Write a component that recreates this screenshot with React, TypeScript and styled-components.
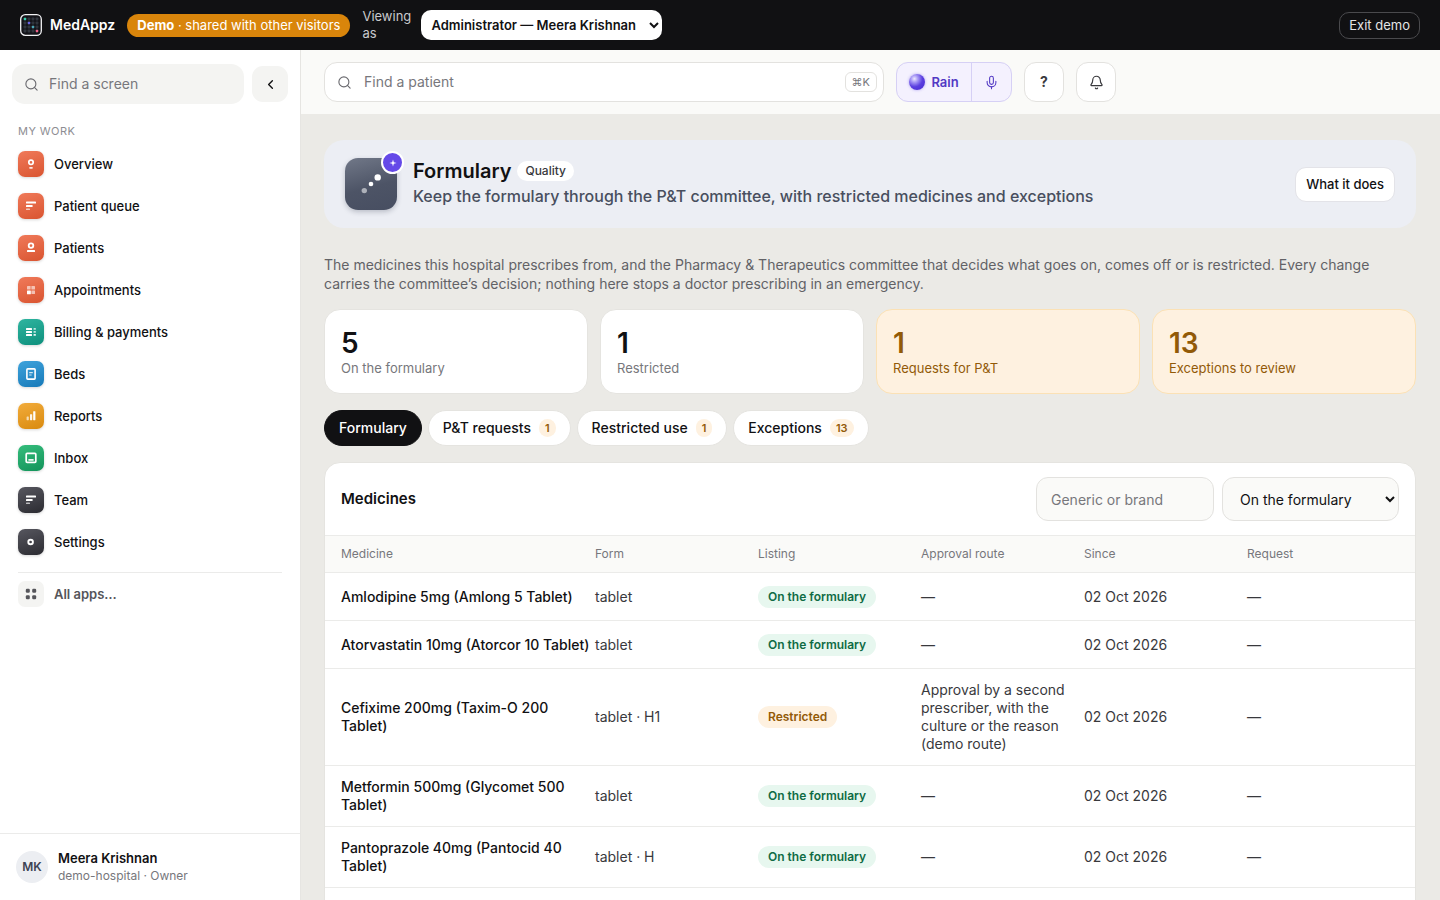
import React from 'react';
import styled, { createGlobalStyle } from 'styled-components';
import { Search, ChevronLeft, Mic, Bell } from 'lucide-react';

const Global = createGlobalStyle`
  * { box-sizing: border-box; }
  html, body, #root { height: 100%; }
  body {
    margin: 0;
    overflow: hidden;
    background: #ebeae6;
    color: #111113;
    font-family: Inter, "Liberation Sans", sans-serif;
    font-size: 14px;
    line-height: 18px;
  }
  button, input, select { font: inherit; color: inherit; margin: 0; }
  button { cursor: pointer; }
  input { outline: none; }
  input::placeholder { color: #77777c; opacity: 1; }
  h1, h2, p, ul { margin: 0; padding: 0; }
`;

const Shell = styled.div`
  height: 100vh;
  display: flex;
  flex-direction: column;
`;

const DemoBar = styled.header`
  flex: none;
  height: 50px;
  padding: 0 20px;
  display: flex;
  align-items: center;
  gap: 12px;
  background: #111113;
  color: #fff;
`;

const Brand = styled.a`
  display: flex;
  align-items: center;
  gap: 8px;
  color: inherit;
  text-decoration: none;
  font-size: 14px;
  font-weight: 600;
`;

const DemoPill = styled.p`
  flex: none;
  height: 23px;
  padding: 0 10px;
  border-radius: 12px;
  background: #d9850b;
  font-size: 13px;
  line-height: 23px;
  white-space: nowrap;
`;

const ViewingLabel = styled.label`
  flex: none;
  width: 47px;
  color: #c9c9cc;
  font-size: 13px;
  line-height: 17px;
`;

const RoleSelect = styled.select`
  width: 241px;
  height: 30px;
  padding: 0 0 0 6px;
  border: 0;
  border-radius: 10px;
  background: #fff;
  color: #111113;
  font-size: 13px;
  font-weight: 600;
`;

const ExitButton = styled.button`
  height: 27px;
  margin-left: auto;
  padding: 0 9px;
  border: 1px solid #4a4a4d;
  border-radius: 10px;
  background: transparent;
  color: #e4e4e6;
  font-size: 13px;
`;

const Body = styled.div`
  flex: 1;
  min-height: 0;
  display: flex;
`;

const Sidebar = styled.aside`
  flex: none;
  width: 301px;
  display: flex;
  flex-direction: column;
  border-right: 1px solid #e6e5e2;
  background: #fff;
`;

const SideTools = styled.div`
  display: flex;
  align-items: center;
  gap: 8px;
  padding: 14px 12px 0;
`;

const SearchBox = styled.label<{ $bordered?: boolean }>`
  flex: 1;
  min-width: 0;
  max-width: 560px;
  height: 40px;
  padding: 0 ${p => (p.$bordered ? 6 : 12)}px 0 12px;
  display: flex;
  align-items: center;
  gap: ${p => (p.$bordered ? 12 : 10)}px;
  border: ${p => (p.$bordered ? '1px solid #e3e2df' : '0')};
  border-radius: 13px;
  background: ${p => (p.$bordered ? '#fff' : '#f4f4f2')};
  color: #6a6a6f;
`;

const SearchInput = styled.input`
  flex: 1;
  min-width: 0;
  padding: 0;
  border: 0;
  background: transparent;
  font-size: 14px;
`;

const Kbd = styled.kbd`
  height: 20px;
  padding: 0 6px;
  border: 1px solid #e3e2df;
  border-radius: 6px;
  color: #77777c;
  font-family: Inter, "DejaVu Sans", sans-serif;
  font-size: 11px;
  line-height: 18px;
`;

const CollapseButton = styled.button`
  flex: none;
  width: 36px;
  height: 36px;
  padding: 0;
  display: grid;
  place-items: center;
  border: 0;
  border-radius: 11px;
  background: #f4f4f2;
`;

const SideHeading = styled.h2`
  margin: 18px 18px 3px;
  color: #8e8e93;
  font-size: 11px;
  font-weight: 400;
  letter-spacing: 0.04em;
  text-transform: uppercase;
`;

const NavLink = styled.a<{ $muted?: boolean }>`
  height: 42px;
  padding: 0 18px;
  display: flex;
  align-items: center;
  gap: 10px;
  color: ${p => (p.$muted ? '#55555a' : '#111113')};
  font-size: 13px;
  font-weight: ${p => (p.$muted ? 600 : 500)};
  text-decoration: none;
`;

const AppTile = styled.span<{ $from: string; $to: string; $flat?: boolean }>`
  width: 26px;
  height: 26px;
  display: grid;
  place-items: center;
  border-radius: 7px;
  background: linear-gradient(160deg, ${p => p.$from}, ${p => p.$to});
  box-shadow: ${p => (p.$flat ? 'none' : '0 1px 3px rgba(0, 0, 0, 0.16)')};
`;

const SideRule = styled.hr`
  margin: 9px 18px 0;
  border: 0;
  border-top: 1px solid #ebebea;
`;

const Account = styled.div`
  height: 67px;
  margin-top: auto;
  padding: 0 16px;
  display: flex;
  align-items: center;
  gap: 10px;
  border-top: 1px solid #ebebea;
  font-size: 12px;
  line-height: 17px;
  color: #77777c;
`;

const Avatar = styled.span`
  width: 32px;
  height: 32px;
  border-radius: 50%;
  background: #eceef2;
  color: #3d4354;
  font-weight: 600;
  line-height: 32px;
  text-align: center;
`;

const AccountName = styled.strong`
  display: block;
  color: #111113;
  font-size: 13px;
  font-weight: 600;
`;

const Main = styled.main`
  flex: 1;
  min-width: 0;
  overflow: hidden;
`;

const TopBar = styled.div`
  height: 64px;
  padding: 0 23px;
  display: flex;
  align-items: center;
  gap: 12px;
  background: #fafaf8;
`;

const RainGroup = styled.div`
  height: 40px;
  display: flex;
  border: 1px solid #d6d0f5;
  border-radius: 12px;
  background: #f4f1fe;
  overflow: hidden;
`;

const RainButton = styled.button<{ $divided?: boolean }>`
  width: ${p => (p.$divided ? 40 : 74)}px;
  padding: 0;
  display: flex;
  align-items: center;
  justify-content: center;
  gap: 6px;
  border: 0;
  border-left: ${p => (p.$divided ? '1px solid #d6d0f5' : '0')};
  background: transparent;
  color: #5239c4;
  font-size: 13px;
  font-weight: 600;
`;

const Orb = styled.span`
  width: 16px;
  height: 16px;
  border-radius: 50%;
  background: radial-gradient(circle at 34% 30%, #ece8ff 0, #a99af5 22%, #5b3fe0 52%, #4527cf 100%);
  box-shadow: 0 0 3px rgba(91, 63, 224, 0.45);
`;

const SquareButton = styled.button`
  width: 40px;
  height: 40px;
  padding: 0;
  display: grid;
  place-items: center;
  border: 1px solid #e3e2df;
  border-radius: 12px;
  background: #fff;
  color: #39393d;
  font-size: 14px;
  font-weight: 700;
`;

const Content = styled.div`
  padding: 26px 24px 0 23px;
  display: flex;
  flex-direction: column;
`;

const Hero = styled.section`
  height: 88px;
  padding: 0 21px;
  display: flex;
  align-items: center;
  gap: 16px;
  border-radius: 20px;
  background: #eceef4;
`;

const HeroIcon = styled.span`
  position: relative;
  width: 52px;
  height: 52px;
  display: block;
  border-radius: 13px;
  background: linear-gradient(165deg, #717888, #4d5466 55%, #474e61);
  box-shadow: 0 2px 5px rgba(40, 46, 66, 0.25);
`;

const Spark = styled.span`
  position: absolute;
  top: -7px;
  right: -7px;
  width: 23px;
  height: 23px;
  display: grid;
  place-items: center;
  border: 2px solid #fff;
  border-radius: 50%;
  background: #6549e8;
`;

const HeroText = styled.div`
  flex: 1;
  padding-bottom: 2px;
`;

const TitleRow = styled.div`
  display: flex;
  align-items: center;
  gap: 6px;
`;

const Title = styled.h1`
  font-size: 20px;
  font-weight: 600;
  line-height: 26px;
`;

const Tag = styled.span`
  height: 20px;
  padding: 0 8px;
  border-radius: 10px;
  background: #fff;
  color: #39393d;
  font-size: 12px;
  font-weight: 500;
  line-height: 20px;
`;

const Subtitle = styled.p`
  color: #484e5e;
  font-size: 16px;
  font-weight: 500;
  line-height: 24px;
`;

const HelpButton = styled.button`
  height: 35px;
  padding: 0 10px;
  border: 1px solid #e3e3e8;
  border-radius: 11px;
  background: #fff;
  font-size: 13px;
  font-weight: 500;
`;

const Intro = styled.p`
  margin-top: 27px;
  color: #626266;
  font-size: 14px;
  line-height: 19px;
`;

const Stats = styled.div`
  margin-top: 16px;
  display: grid;
  grid-template-columns: repeat(4, 1fr);
  gap: 12px;
`;

const Stat = styled.div<{ $warn?: boolean }>`
  height: 85px;
  padding: 17px 16px 0;
  border: 1px solid ${p => (p.$warn ? '#fbe1b5' : '#e5e4e0')};
  border-radius: 16px;
  background: ${p => (p.$warn ? '#fef1e0' : '#fff')};
  color: ${p => (p.$warn ? '#925a08' : '#77777c')};
  font-size: 13px;
`;

const StatValue = styled.strong<{ $warn?: boolean }>`
  display: block;
  color: ${p => (p.$warn ? '#925a08' : '#111113')};
  font-size: 28px;
  font-weight: 600;
  line-height: 32px;
`;

const Tabs = styled.div`
  margin: 16px 0;
  display: flex;
  gap: 6px;
`;

const Tab = styled.button<{ $active?: boolean }>`
  height: 36px;
  padding: 0 14px;
  display: flex;
  align-items: center;
  gap: 8px;
  border: 1px solid ${p => (p.$active ? '#111113' : '#e5e4e0')};
  border-radius: 18px;
  background: ${p => (p.$active ? '#111113' : '#fff')};
  color: ${p => (p.$active ? '#fff' : '#111113')};
  font-size: 14px;
  font-weight: 500;
`;

const Count = styled.span`
  padding: 0 6px;
  border-radius: 9px;
  background: #fef1e0;
  color: #925a08;
  font-size: 11px;
  font-weight: 600;
  line-height: 18px;
`;

const Panel = styled.section`
  border: 1px solid #e5e4e0;
  border-radius: 16px 16px 0 0;
  background: #fff;
  overflow: hidden;
`;

const PanelHead = styled.div`
  height: 72px;
  padding: 0 16px;
  display: flex;
  align-items: center;
  gap: 8px;
`;

const PanelTitle = styled.h2`
  flex: 1;
  font-size: 15px;
  font-weight: 600;
  line-height: 20px;
`;

const FilterInput = styled.input`
  width: 178px;
  height: 44px;
  padding: 0 14px;
  border: 1px solid #e3e2df;
  border-radius: 12px;
  background: #fafaf8;
`;

const FilterSelect = styled.select`
  width: 177px;
  height: 44px;
  padding: 0 0 0 13px;
  border: 1px solid #e3e2df;
  border-radius: 12px;
  background: #fafaf8;
`;

const Table = styled.table`
  display: block;
  padding-bottom: 60px;
  thead, tbody { display: block; }
`;

const Row = styled.tr<{ $head?: boolean }>`
  padding: 0 16px;
  display: grid;
  grid-template-columns: 250fr repeat(4, 159fr) 152fr;
  column-gap: 4px;
  align-items: center;
  border-bottom: 1px solid #ebebe9;
  border-top: ${p => (p.$head ? '1px solid #ebebe9' : '0')};
  background: ${p => (p.$head ? '#fafaf8' : '#fff')};
  min-height: ${p => (p.$head ? 38 : 48)}px;
`;

const HeadCell = styled.th`
  padding: 0;
  color: #77777c;
  font-size: 12px;
  font-weight: 400;
  text-align: left;
`;

const Cell = styled.td<{ $strong?: boolean }>`
  padding: 12px 0;
  color: ${p => (p.$strong ? '#111113' : '#39393d')};
  font-size: 14px;
  font-weight: ${p => (p.$strong ? 500 : 400)};
`;

const Status = styled.span<{ $warn?: boolean }>`
  display: inline-block;
  padding: 0 10px;
  border-radius: 11px;
  background: ${p => (p.$warn ? '#fef1e0' : '#e7f7ef')};
  color: ${p => (p.$warn ? '#925a08' : '#0f6b45')};
  font-size: 12px;
  font-weight: 600;
  line-height: 22px;
  vertical-align: middle;
`;

const StatusCell = styled(Cell)`
  padding: 0;
`;

const glyphs: Record<string, React.ReactNode> = {
  overview: (
    <>
      <circle cx="13" cy="11.3" r="2.2" fill="none" stroke="#fff" strokeWidth="1.7" />
      <rect x="11.2" y="16" width="3.6" height="1.8" rx=".8" fill="#fff" opacity=".85" />
    </>
  ),
  lines: (
    <g fill="#fff">
      <rect x="8" y="8.4" width="10" height="2.1" rx=".6" />
      <rect x="8" y="12" width="6.6" height="2" rx=".6" />
      <rect x="8" y="15.4" width="4" height="1.6" rx=".6" opacity=".65" />
    </g>
  ),
  person: (
    <>
      <circle cx="13" cy="10.6" r="2.3" fill="none" stroke="#fff" strokeWidth="1.8" />
      <rect x="9" y="15" width="8" height="2" rx=".6" fill="#fff" />
    </>
  ),
  calendar: (
    <g fill="#fff">
      <rect x="9" y="9" width="3.6" height="3.6" rx=".5" opacity=".6" />
      <rect x="13.4" y="9" width="3.6" height="3.6" rx=".5" opacity=".6" />
      <rect x="9" y="13.4" width="3.8" height="3.8" rx=".5" />
      <rect x="13.4" y="13.4" width="3.6" height="3.6" rx=".5" opacity=".6" />
    </g>
  ),
  billing: (
    <g fill="#fff">
      <rect x="8" y="9" width="6" height="2" rx=".5" />
      <rect x="8" y="12" width="6" height="2" rx=".5" />
      <rect x="8" y="15" width="6" height="2" rx=".5" />
      <rect x="15.5" y="9" width="2.4" height="1.8" rx=".5" opacity=".7" />
      <rect x="15.5" y="12" width="2.4" height="1.8" rx=".5" opacity=".7" />
      <rect x="15.5" y="15" width="2.4" height="1.8" rx=".5" opacity=".9" />
    </g>
  ),
  beds: (
    <>
      <rect x="8.9" y="7.9" width="8.2" height="10.2" rx=".8" fill="none" stroke="#fff" strokeWidth="1.6" />
      <path d="M11.2 11.6h3.6M11.2 14h2.4" stroke="#fff" strokeWidth="1.2" opacity=".8" />
    </>
  ),
  bars: (
    <g fill="#fff">
      <rect x="8.6" y="13.6" width="2.2" height="3.6" rx=".4" opacity=".65" />
      <rect x="12" y="11.2" width="2.2" height="6" rx=".4" opacity=".9" />
      <rect x="15.2" y="8.2" width="2.2" height="9" rx=".4" />
    </g>
  ),
  inbox: (
    <>
      <rect x="8.2" y="8.4" width="9.6" height="9" rx=".9" fill="none" stroke="#fff" strokeWidth="1.7" />
      <rect x="10.4" y="14" width="5.2" height="1.8" fill="#fff" opacity=".9" />
    </>
  ),
  dot: <circle cx="12.6" cy="13" r="2.3" fill="none" stroke="#fff" strokeWidth="1.9" />,
  apps: (
    <g fill="#55555a">
      <rect x="7.8" y="7.8" width="4" height="4" rx="1.2" />
      <rect x="14.2" y="7.8" width="4" height="4" rx="1.2" />
      <rect x="7.8" y="14.2" width="4" height="4" rx="1.2" />
      <rect x="14.2" y="14.2" width="4" height="4" rx="1.2" />
    </g>
  ),
};

function Glyph({ name }: { name: string }) {
  return (
    <svg width="26" height="26" viewBox="0 0 26 26" aria-hidden="true">
      {glyphs[name]}
    </svg>
  );
}

function LogoMark() {
  const cells = [0, 1, 2, 3];
  return (
    <svg width="22" height="22" viewBox="0 0 22 22" aria-hidden="true">
      <rect x=".7" y=".7" width="20.6" height="20.6" rx="4.6" fill="#131318" stroke="#f2f2f4" strokeWidth="1.3" />
      {cells.map(r =>
        cells.map(c => (
          <rect key={`${r}-${c}`} x={3.6 + c * 4} y={3.6 + r * 4} width="2.8" height="2.8" rx=".7" fill="#30353d" />
        )),
      )}
      <rect x="3.8" y="3.8" width="2.4" height="2.4" rx=".8" fill="#35d0ae" />
      <rect x="7.8" y="7.8" width="2.4" height="2.4" rx=".8" fill="#6a63e6" />
      <rect x="11.8" y="11.8" width="2.4" height="2.4" rx=".8" fill="#4aa7b8" />
      <rect x="15.8" y="15.8" width="2.4" height="2.4" rx=".8" fill="#ef5f86" />
    </svg>
  );
}

const coral = ['#f07a5a', '#d95430'];
const slate = ['#57575f', '#2b2b31'];

const nav = [
  { label: 'Overview', glyph: 'overview', tone: coral },
  { label: 'Patient queue', glyph: 'lines', tone: coral },
  { label: 'Patients', glyph: 'person', tone: coral },
  { label: 'Appointments', glyph: 'calendar', tone: coral },
  { label: 'Billing & payments', glyph: 'billing', tone: ['#2fb5a0', '#0d8f7c'] },
  { label: 'Beds', glyph: 'beds', tone: ['#3fa3dc', '#1679b8'] },
  { label: 'Reports', glyph: 'bars', tone: ['#f2ac3c', '#d98a0e'] },
  { label: 'Inbox', glyph: 'inbox', tone: ['#35bd7c', '#12935a'] },
  { label: 'Team', glyph: 'lines', tone: slate },
  { label: 'Settings', glyph: 'dot', tone: slate },
];

const stats = [
  { value: 5, label: 'On the formulary' },
  { value: 1, label: 'Restricted' },
  { value: 1, label: 'Requests for P&T', warn: true },
  { value: 13, label: 'Exceptions to review', warn: true },
];

const tabs = [
  { label: 'Formulary' },
  { label: 'P&T requests', count: 1 },
  { label: 'Restricted use', count: 1 },
  { label: 'Exceptions', count: 13 },
];

const columns = ['Medicine', 'Form', 'Listing', 'Approval route', 'Since', 'Request'];

const medicines = [
  { name: 'Amlodipine 5mg (Amlong 5 Tablet)', form: 'tablet' },
  { name: 'Atorvastatin 10mg (Atorcor 10 Tablet)', form: 'tablet' },
  {
    name: 'Cefixime 200mg (Taxim-O 200 Tablet)',
    form: 'tablet · H1',
    route: 'Approval by a second prescriber, with the culture or the reason (demo route)',
  },
  { name: 'Metformin 500mg (Glycomet 500 Tablet)', form: 'tablet' },
  { name: 'Pantoprazole 40mg (Pantocid 40 Tablet)', form: 'tablet · H' },
];

export default function App() {
  return (
    <Shell>
      <Global />
      <DemoBar>
        <Brand href="#">
          <LogoMark />
          MedAppz
        </Brand>
        <DemoPill>
          <strong>Demo</strong> · shared with other visitors
        </DemoPill>
        <ViewingLabel htmlFor="role">Viewing as</ViewingLabel>
        <RoleSelect id="role">
          <option>Administrator — Meera Krishnan</option>
        </RoleSelect>
        <ExitButton type="button">Exit demo</ExitButton>
      </DemoBar>

      <Body>
        <Sidebar>
          <SideTools>
            <SearchBox>
              <Search size={15} strokeWidth={1.8} />
              <SearchInput type="text" placeholder="Find a screen" aria-label="Find a screen" />
            </SearchBox>
            <CollapseButton type="button" aria-label="Collapse sidebar">
              <ChevronLeft size={15} strokeWidth={2.2} />
            </CollapseButton>
          </SideTools>
          <SideHeading>My work</SideHeading>
          <nav>
            {nav.map(item => (
              <NavLink href="#" key={item.label}>
                <AppTile $from={item.tone[0]} $to={item.tone[1]}>
                  <Glyph name={item.glyph} />
                </AppTile>
                {item.label}
              </NavLink>
            ))}
            <SideRule />
            <NavLink href="#" $muted>
              <AppTile $from="#f4f4f2" $to="#f4f4f2" $flat>
                <Glyph name="apps" />
              </AppTile>
              All apps…
            </NavLink>
          </nav>
          <Account>
            <Avatar>MK</Avatar>
            <div>
              <AccountName>Meera Krishnan</AccountName>
              demo-hospital · Owner
            </div>
          </Account>
        </Sidebar>

        <Main>
          <TopBar>
            <SearchBox $bordered>
              <Search size={15} strokeWidth={1.8} />
              <SearchInput type="text" placeholder="Find a patient" aria-label="Find a patient" />
              <Kbd>⌘K</Kbd>
            </SearchBox>
            <RainGroup>
              <RainButton type="button">
                <Orb />
                Rain
              </RainButton>
              <RainButton type="button" $divided aria-label="Dictate">
                <Mic size={15} strokeWidth={1.7} />
              </RainButton>
            </RainGroup>
            <SquareButton type="button">?</SquareButton>
            <SquareButton type="button" aria-label="Notifications">
              <Bell size={15} strokeWidth={1.9} />
            </SquareButton>
          </TopBar>

          <Content>
            <Hero>
              <HeroIcon>
                <svg width="52" height="52" viewBox="0 0 52 52" aria-hidden="true">
                  <circle cx="19.3" cy="32.6" r="2.7" fill="#fff" opacity=".55" />
                  <circle cx="26" cy="26" r="2.3" fill="#fff" />
                  <circle cx="32.7" cy="19.4" r="3.2" fill="#fff" />
                </svg>
                <Spark>
                  <svg width="8" height="8" viewBox="0 0 8 8" aria-hidden="true">
                    <path d="M4 .4 4.8 3.2 7.6 4 4.8 4.8 4 7.6 3.2 4.8.4 4l2.8-.8z" fill="#fff" />
                  </svg>
                </Spark>
              </HeroIcon>
              <HeroText>
                <TitleRow>
                  <Title>Formulary</Title>
                  <Tag>Quality</Tag>
                </TitleRow>
                <Subtitle>Keep the formulary through the P&amp;T committee, with restricted medicines and exceptions</Subtitle>
              </HeroText>
              <HelpButton type="button">What it does</HelpButton>
            </Hero>

            <Intro>
              The medicines this hospital prescribes from, and the Pharmacy &amp; Therapeutics committee that decides
              what goes on, comes off or is restricted. Every change carries the committee’s decision; nothing here
              stops a doctor prescribing in an emergency.
            </Intro>

            <Stats>
              {stats.map(s => (
                <Stat key={s.label} $warn={s.warn}>
                  <StatValue $warn={s.warn}>{s.value}</StatValue>
                  {s.label}
                </Stat>
              ))}
            </Stats>

            <Tabs role="tablist">
              {tabs.map((t, i) => (
                <Tab type="button" role="tab" aria-selected={i === 0} key={t.label} $active={i === 0}>
                  {t.label}
                  {t.count && <Count>{t.count}</Count>}
                </Tab>
              ))}
            </Tabs>

            <Panel>
              <PanelHead>
                <PanelTitle>Medicines</PanelTitle>
                <FilterInput type="text" placeholder="Generic or brand" aria-label="Generic or brand" />
                <FilterSelect aria-label="Listing">
                  <option>On the formulary</option>
                </FilterSelect>
              </PanelHead>
              <Table>
                <thead>
                  <Row $head>
                    {columns.map(c => (
                      <HeadCell key={c} scope="col">
                        {c}
                      </HeadCell>
                    ))}
                  </Row>
                </thead>
                <tbody>
                  {medicines.map(m => (
                    <Row key={m.name}>
                      <Cell $strong>{m.name}</Cell>
                      <Cell>{m.form}</Cell>
                      <StatusCell>
                        <Status $warn={!!m.route}>{m.route ? 'Restricted' : 'On the formulary'}</Status>
                      </StatusCell>
                      <Cell>{m.route ?? '—'}</Cell>
                      <Cell>02 Oct 2026</Cell>
                      <Cell>—</Cell>
                    </Row>
                  ))}
                </tbody>
              </Table>
            </Panel>
          </Content>
        </Main>
      </Body>
    </Shell>
  );
}
